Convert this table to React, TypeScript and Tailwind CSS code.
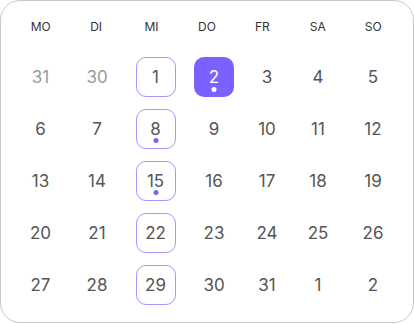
const days = ['MO', 'DI', 'MI', 'DO', 'FR', 'SA', 'SO']

type Cell = { n: number; muted?: boolean; outline?: boolean; active?: boolean; dot?: boolean }

const weeks: Cell[][] = [
  [{ n: 31, muted: true }, { n: 30, muted: true }, { n: 1, outline: true }, { n: 2, active: true, dot: true }, { n: 3 }, { n: 4 }, { n: 5 }],
  [{ n: 6 }, { n: 7 }, { n: 8, outline: true, dot: true }, { n: 9 }, { n: 10 }, { n: 11 }, { n: 12 }],
  [{ n: 13 }, { n: 14 }, { n: 15, outline: true, dot: true }, { n: 16 }, { n: 17 }, { n: 18 }, { n: 19 }],
  [{ n: 20 }, { n: 21 }, { n: 22, outline: true }, { n: 23 }, { n: 24 }, { n: 25 }, { n: 26 }],
  [{ n: 27 }, { n: 28 }, { n: 29, outline: true }, { n: 30 }, { n: 31 }, { n: 1 }, { n: 2 }],
]

const DayCell = ({ cell }: { cell: Cell }) => {
  let box = 'text-[#555]'
  if (cell.muted) box = 'text-[#9a9a9a]'
  if (cell.outline) box = 'border border-[#a696ff] text-[#555]'
  if (cell.active) box = 'bg-[#7b61ff] text-white'

  return (
    <div className="flex h-[52px] items-center justify-center">
      <div className={`relative flex h-10 w-10 items-center justify-center rounded-[10px] ${box}`}>
        <span className="text-[17px] leading-none">{cell.n}</span>
        {cell.dot && (
          <span
            className={`absolute bottom-[5px] left-1/2 h-[5px] w-[5px] -translate-x-1/2 rounded-full ${
              cell.active ? 'bg-white' : 'bg-[#7b61ff]'
            }`}
          />
        )}
      </div>
    </div>
  )
}

export default function App() {
  return (
    <div className="h-[324px] w-[414px] bg-white" style={{ fontFamily: '"Inter", "Noto Sans", sans-serif' }}>
      <div className="h-[323px] w-[414px] rounded-[20px] border border-[#c9c9c9] px-3 pt-[16px]">
        <div className="grid grid-cols-7">
          {days.map((d) => (
            <div key={d} className="flex h-5 items-center justify-center text-[12px] text-[#333]">
              {d}
            </div>
          ))}
        </div>
        <div className="mt-[14px] grid grid-cols-[55px_58px_59px_58px_48px_54px_56px]">
          {weeks.flat().map((c, i) => (
            <DayCell key={i} cell={c} />
          ))}
        </div>
      </div>
    </div>
  )
}
